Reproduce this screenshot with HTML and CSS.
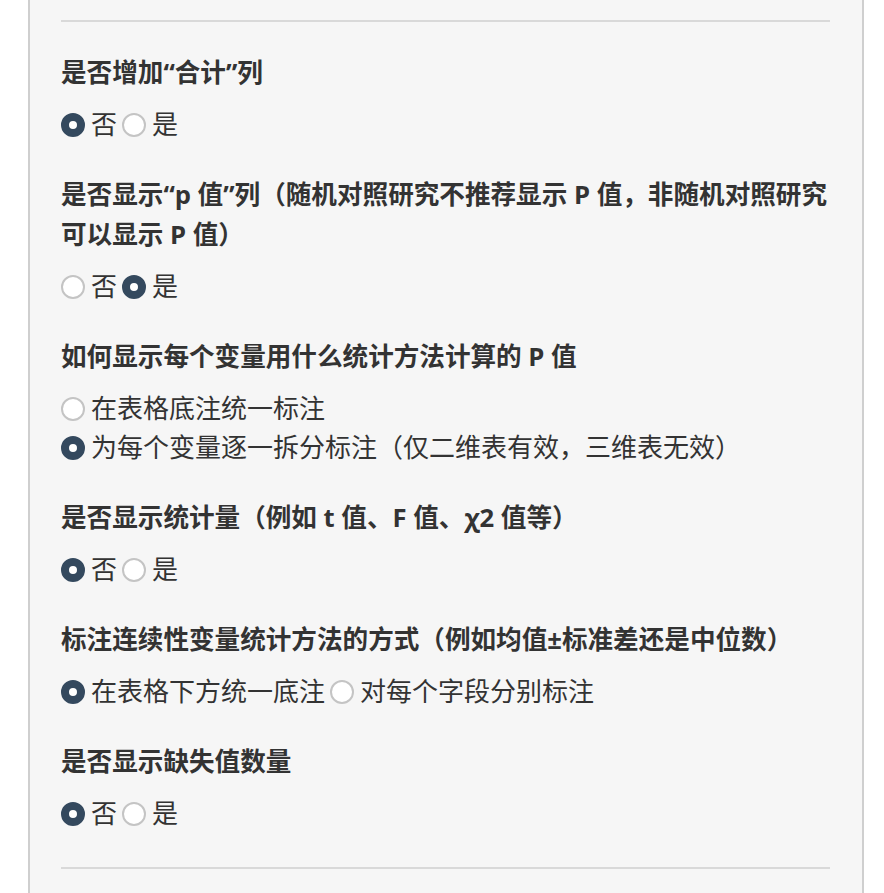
FILE: index.html
```html
<!DOCTYPE html>
<html lang="zh-CN">
<head>
  <meta charset="UTF-8" />
  <meta name="viewport" content="width=device-width, initial-scale=1.0"/>
  <title>表格设置</title>
  <link rel="stylesheet" href="styles.css">
</head>
<body>

<div class="panel">
  <hr class="sep">

  <!-- 合计列 -->
  <div class="grupo">
    <div class="titulo">是否增加“合计”列</div>
    <div class="opciones">
      <label class="opcion"><input type="radio" name="total" checked><span>否</span></label>
      <label class="opcion"><input type="radio" name="total"><span>是</span></label>
    </div>
  </div>

  <!-- p 值列 -->
  <div class="grupo">
    <div class="titulo">是否显示“p 值”列（随机对照研究不推荐显示 P 值，非随机对照研究可以显示 P 值）</div>
    <div class="opciones">
      <label class="opcion"><input type="radio" name="pvalor"><span>否</span></label>
      <label class="opcion"><input type="radio" name="pvalor" checked><span>是</span></label>
    </div>
  </div>

  <!-- 统计方法 -->
  <div class="grupo">
    <div class="titulo">如何显示每个变量用什么统计方法计算的 P 值</div>
    <div class="opciones">
      <label class="opcion"><input type="radio" name="metodo"><span>在表格底注统一标注</span></label>
      <label class="opcion"><input type="radio" name="metodo" checked><span>为每个变量逐一拆分标注（仅二维表有效，三维表无效）</span></label>
    </div>
  </div>

  <!-- 统计量 -->
  <div class="grupo">
    <div class="titulo">是否显示统计量（例如 t 值、F 值、χ2 值等）</div>
    <div class="opciones">
      <label class="opcion"><input type="radio" name="estad" checked><span>否</span></label>
      <label class="opcion"><input type="radio" name="estad"><span>是</span></label>
    </div>
  </div>

  <!-- 连续性变量 -->
  <div class="grupo">
    <div class="titulo">标注连续性变量统计方法的方式（例如均值±标准差还是中位数）</div>
    <div class="opciones">
      <label class="opcion"><input type="radio" name="continua" checked><span>在表格下方统一底注</span></label>
      <label class="opcion"><input type="radio" name="continua"><span>对每个字段分别标注</span></label>
    </div>
  </div>

  <!-- 缺失值 -->
  <div class="grupo">
    <div class="titulo">是否显示缺失值数量</div>
    <div class="opciones">
      <label class="opcion"><input type="radio" name="faltante" checked><span>否</span></label>
      <label class="opcion"><input type="radio" name="faltante"><span>是</span></label>
    </div>
  </div>

  <hr class="sep sep-fin">
</div>

</body>
</html>
```

FILE: styles.css
```css
* {
  box-sizing: border-box;
}

body {
  margin: 0;
  padding: 0;
  background: #fff;
  font-family: 'Open Sans', 'Noto Sans CJK SC', sans-serif;
  color: #333;
}

.panel {
  margin: 0 20px 0 28px;
  padding: 20px 32px 40px 31px;
  background: #f6f6f6;
  border-left: 2px solid #cfcfcf;
  border-right: 2px solid #cfcfcf;
  min-height: 893px;
  display: flex;
  flex-direction: column;
  gap: 31px;
}

.sep {
  margin: 0;
  border: none;
  height: 2px;
  background: #d9d9d9;
}

.sep-fin {
  margin-top: 3px;
}

.titulo {
  font-size: 25.6px;
  font-weight: bold;
  line-height: 40px;
  margin-bottom: 12px;
}

.opciones {
  display: flex;
  flex-wrap: wrap;
  column-gap: 5px;
}

.opcion {
  display: inline-flex;
  align-items: center;
  gap: 6px;
  font-size: 26px;
  line-height: 39px;
  height: 39px;
  cursor: pointer;
}

/* radios redondos */
.opcion input {
  appearance: none;
  -webkit-appearance: none;
  margin: 0;
  width: 24px;
  height: 24px;
  border-radius: 50%;
  border: 2px solid #c4c4c4;
  background: #fff;
  flex-shrink: 0;
}

.opcion input:checked {
  border: 8px solid #34495e;
  background: #fff;
}
```
